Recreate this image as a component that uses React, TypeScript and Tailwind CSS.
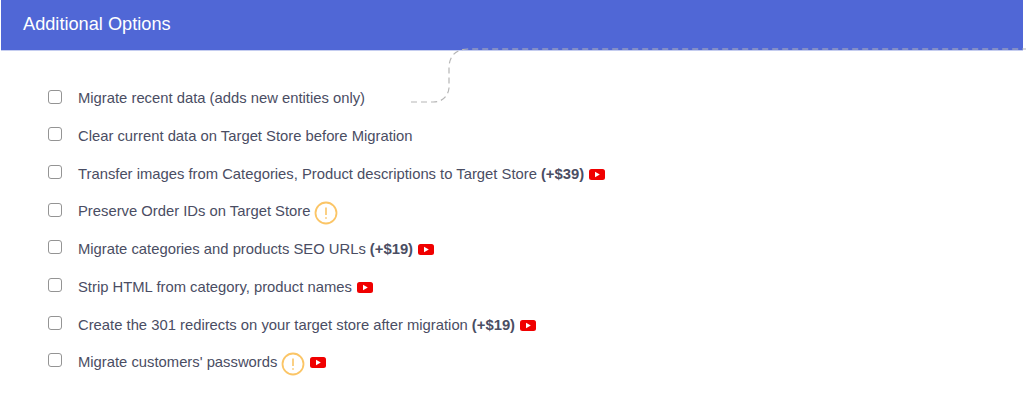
const options = [
  { label: 'Migrate recent data (adds new entities only)' },
  { label: 'Clear current data on Target Store before Migration' },
  { label: 'Transfer images from Categories, Product descriptions to Target Store', price: '(+$39)', video: true },
  { label: 'Preserve Order IDs on Target Store', warn: true },
  { label: 'Migrate categories and products SEO URLs', price: '(+$19)', video: true },
  { label: 'Strip HTML from category, product names', video: true },
  { label: 'Create the 301 redirects on your target store after migration', price: '(+$19)', video: true },
  { label: "Migrate customers' passwords", warn: true, video: true },
]

function YoutubeIcon() {
  return (
    <svg className="ml-[5px] mt-px" width="16" height="11" viewBox="0 0 16 11">
      <rect width="16" height="11" rx="2.5" fill="#f00000" />
      <path d="M6 2.8v5.4l4.8-2.7z" fill="#fff" />
    </svg>
  )
}

function WarnIcon() {
  return (
    <svg className="ml-[4px] mt-[3px]" width="24" height="24" viewBox="0 0 24 24" fill="none">
      <circle cx="12" cy="12" r="10.5" stroke="#fbc566" strokeWidth="1.8" />
      <path d="M12 6.5v7.5M12 16.2v1.6" stroke="#fbc566" strokeWidth="1.6" />
    </svg>
  )
}

export default function App() {
  return (
    <div className="relative h-[412px] w-[1026px] overflow-hidden bg-white font-['Liberation_Sans',sans-serif]">
      <div className="ml-px mr-[3px] flex h-[51px] items-center border-b border-[#c5cdf0] bg-[#5067d6] pb-px pl-[22px] text-[18.2px] text-white">
        Additional Options
      </div>

      {/* dashed connector from the header down to the first option */}
      <svg className="absolute left-0 top-0" width="1026" height="110" fill="none">
        <path
          d="M411 102H433C443 102 448 96 449 88V68C449 56 456 49 468 49H1026"
          stroke="#b5b5b5"
          strokeWidth="1.2"
          strokeDasharray="6 4"
        />
      </svg>

      <div className="flex flex-col gap-[16.7px] pl-[48px] pt-[37px]">
        {options.map((o) => (
          <label key={o.label} className="flex h-[21px] items-center text-[14.8px] text-[#4a4d63]">
            <span className="mb-[4px] mr-[16px] h-[14px] w-[14px] shrink-0 rounded-[3px] border-[1.5px] border-[#949494] bg-white" />
            <span>{o.label}</span>
            {o.price && <b className="ml-[4px] font-bold">{o.price}</b>}
            {o.warn && <WarnIcon />}
            {o.video && <YoutubeIcon />}
          </label>
        ))}
      </div>
    </div>
  )
}
